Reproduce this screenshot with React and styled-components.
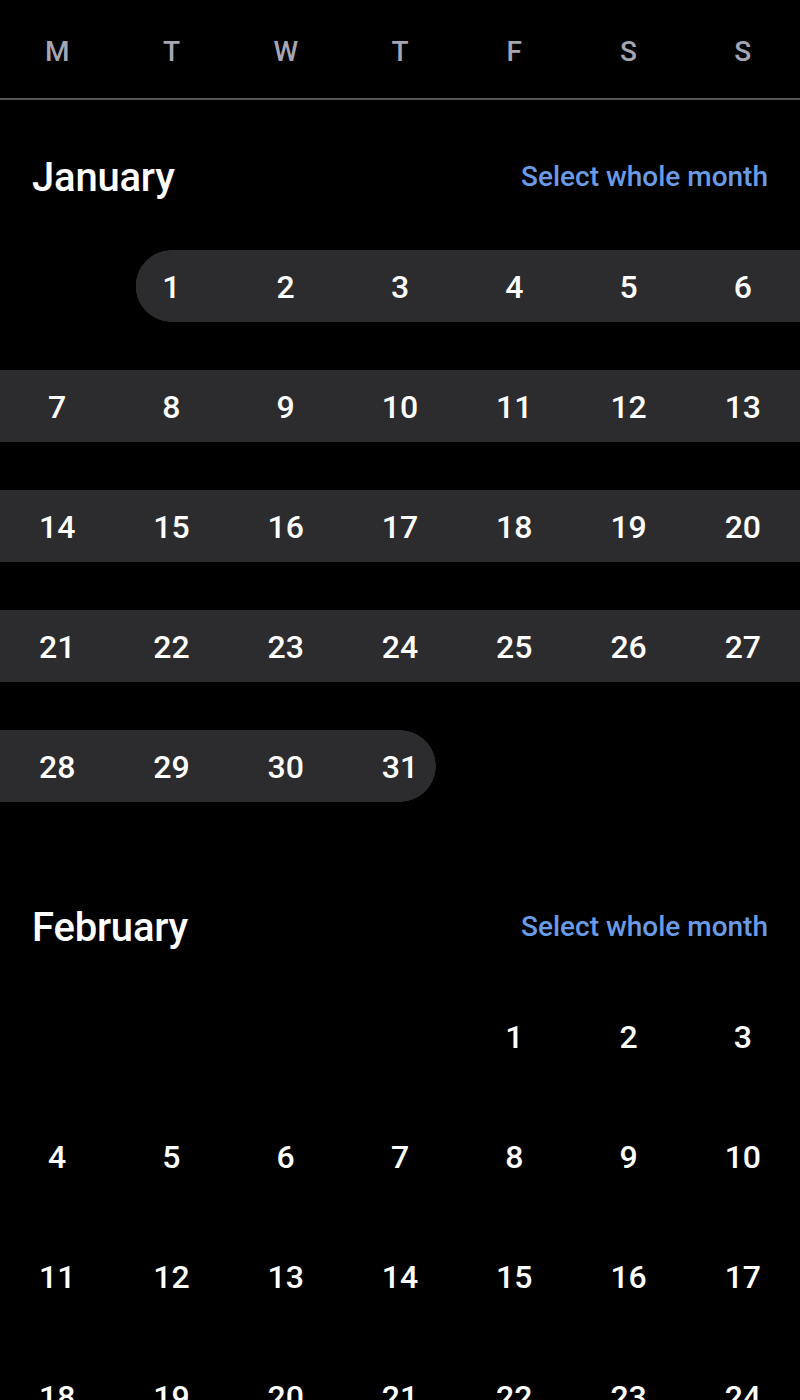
import React from "react";
import styled, { createGlobalStyle, css } from "styled-components";

const Global = createGlobalStyle`
  html, body {
    margin: 0;
    padding: 0;
    background: #000;
  }
  body {
    font-family: Roboto, "Noto Sans", "Liberation Sans", sans-serif;
    color: #fff;
  }
`;

const BAND = "#2c2c2e";

const Page = styled.div`
  width: 800px;
  background: #000;
`;

const Weekdays = styled.div`
  display: grid;
  grid-template-columns: repeat(7, 1fr);
  height: 94px;
  padding-top: 4px;
  border-bottom: 2px solid #555558;
`;

const Weekday = styled.div`
  display: flex;
  align-items: center;
  justify-content: center;
  font-size: 28px;
  font-weight: 500;
  color: #a5a5b4;
`;

const Month = styled.section`
  padding: 40px 0 48px;
`;

const MonthHeader = styled.div`
  display: flex;
  align-items: center;
  justify-content: space-between;
  height: 74px;
  padding: 0 32px;
  margin-bottom: 36px;
`;

const MonthTitle = styled.h2`
  margin: 0;
  font-size: 40px;
  font-weight: 500;
  color: #fff;
  letter-spacing: -0.2px;
`;

const SelectLink = styled.button`
  background: none;
  border: none;
  padding: 0 0 2px;
  font-family: inherit;
  font-size: 28px;
  font-weight: 500;
  color: #6a9be6;
  cursor: pointer;
`;

const Rows = styled.div`
  display: flex;
  flex-direction: column;
  gap: 48px;
`;

const Row = styled.div`
  display: grid;
  grid-template-columns: repeat(7, 1fr);
  height: 72px;
`;

const bandStyles = {
  mid: css`
    background: ${BAND};
  `,
  start: css`
    background: radial-gradient(circle 36px at 50% 50%, ${BAND} 35.5px, transparent 36px),
      linear-gradient(to right, transparent 50%, ${BAND} 50%);
  `,
  end: css`
    background: radial-gradient(circle 36px at 50% 50%, ${BAND} 35.5px, transparent 36px),
      linear-gradient(to right, ${BAND} 50%, transparent 50%);
  `,
  single: css`
    background: radial-gradient(circle 36px at 50% 50%, ${BAND} 35.5px, transparent 36px);
  `,
  none: css``,
};

const Day = styled.div`
  display: flex;
  align-items: center;
  justify-content: center;
  padding-top: 2px;
  font-size: 32px;
  font-weight: 500;
  color: #fff;
  ${(p) => bandStyles[p.$band || "none"]}
`;

const WEEKDAYS = ["M", "T", "W", "T", "F", "S", "S"];

function buildWeeks(offset, days) {
  const cells = [];
  for (let i = 0; i < offset; i++) cells.push(null);
  for (let d = 1; d <= days; d++) cells.push(d);
  while (cells.length % 7) cells.push(null);
  const weeks = [];
  for (let i = 0; i < cells.length; i += 7) weeks.push(cells.slice(i, i + 7));
  return weeks;
}

function bandFor(day, sel) {
  if (!day || !sel) return "none";
  const [a, b] = sel;
  if (day < a || day > b) return "none";
  if (a === b) return "single";
  if (day === a) return "start";
  if (day === b) return "end";
  return "mid";
}

const MONTHS = [
  { name: "January", offset: 1, days: 31, sel: [1, 31] },
  { name: "February", offset: 4, days: 28, sel: null },
];

function MonthBlock({ month }) {
  const weeks = buildWeeks(month.offset, month.days);
  return (
    <Month>
      <MonthHeader>
        <MonthTitle>{month.name}</MonthTitle>
        <SelectLink>Select whole month</SelectLink>
      </MonthHeader>
      <Rows>
        {weeks.map((week, wi) => (
          <Row key={wi}>
            {week.map((day, di) => (
              <Day key={di} $band={bandFor(day, month.sel)}>
                {day || ""}
              </Day>
            ))}
          </Row>
        ))}
      </Rows>
    </Month>
  );
}

export default function App() {
  return (
    <Page>
      <Global />
      <Weekdays>
        {WEEKDAYS.map((w, i) => (
          <Weekday key={i}>{w}</Weekday>
        ))}
      </Weekdays>
      {MONTHS.map((m) => (
        <MonthBlock key={m.name} month={m} />
      ))}
    </Page>
  );
}
